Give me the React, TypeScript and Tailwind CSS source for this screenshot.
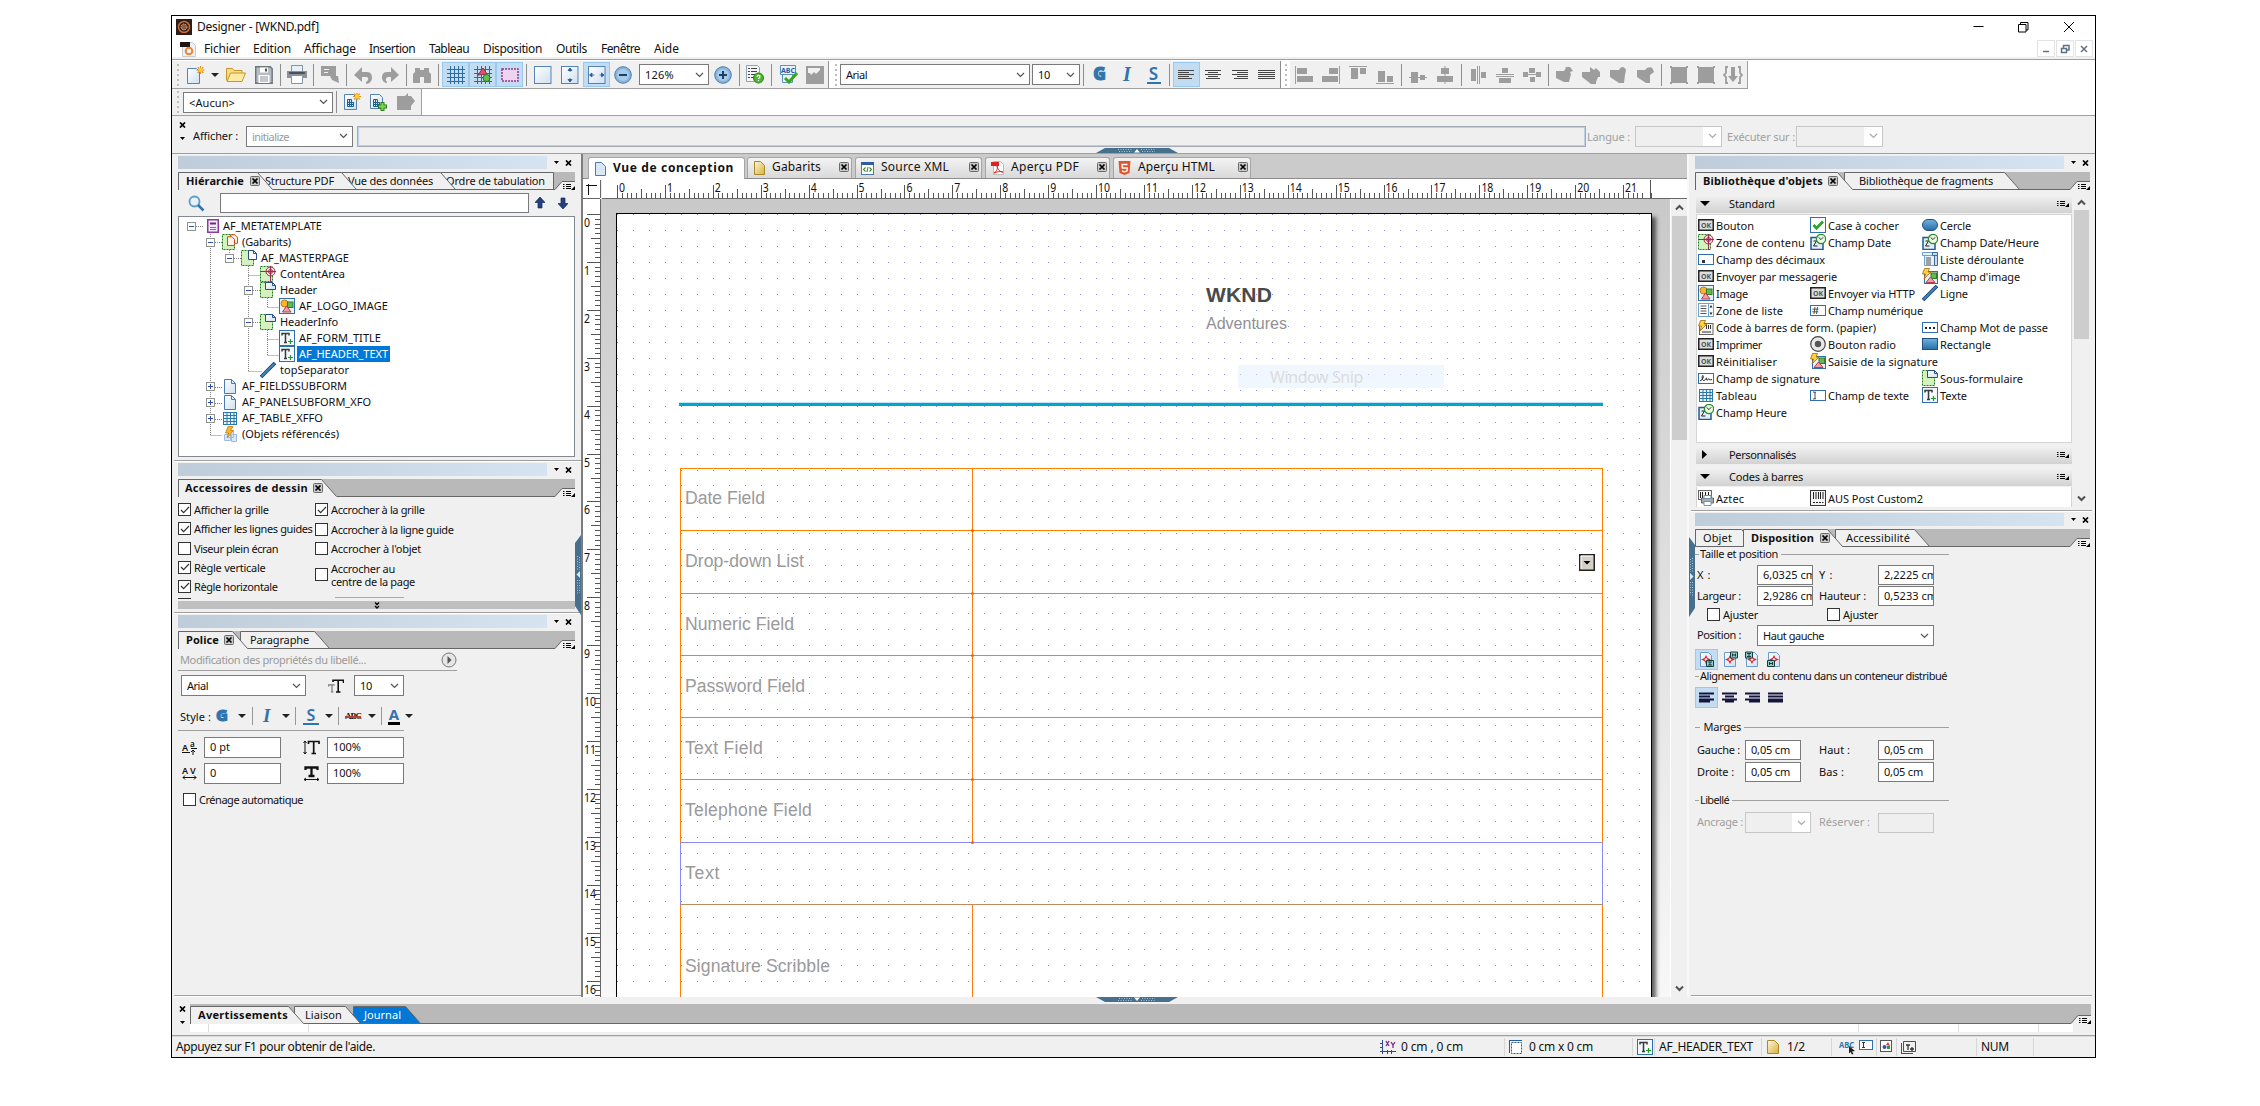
import React, { useLayoutEffect, useRef, useState } from "react";

type Kids = { children?: React.ReactNode };

/* Text set to a fixed run length by adjusting its tracking. */
function T({ w, c = "", children }: { w?: number; c?: string; children: string }) {
  const ref = useRef<HTMLSpanElement>(null);
  const [ls, setLs] = useState(0);
  useLayoutEffect(() => {
    if (w && ref.current) {
      const natural = ref.current.getBoundingClientRect().width;
      setLs((w + 1 - natural) / children.length);
    }
  }, []);
  return (
    <span ref={ref} className={"inline-block w-fit shrink-0 whitespace-pre " + c} style={{ letterSpacing: ls }}>
      {children}
    </span>
  );
}

function Svg({ w = 18, h = 18, vb, c = "", children }: Kids & { w?: number; h?: number; vb?: string; c?: string }) {
  return (
    <svg width={w} height={h} viewBox={vb || `0 0 ${w} ${h}`} className={"block shrink-0 " + c} fill="none">
      {children}
    </svg>
  );
}

const Cell = ({ c = "w-[27px]", on, children }: Kids & { c?: string; on?: boolean }) => (
  <div className={"flex h-[25px] shrink-0 items-center justify-center " + c + (on ? " border border-[#99c9ef] bg-[#c2dcf2]" : "")}>{children}</div>
);
const Sep = ({ c = "w-[6px]" }: { c?: string }) => (
  <div className={"flex h-[22px] shrink-0 justify-center " + c}>
    <div className="h-full w-px bg-[#8e8e8e]" />
  </div>
);
const Grip = ({ c }: { c: string }) => (
  <div className={"flex shrink-0 flex-col items-center gap-[3px] " + c}>
    {[0, 1, 2, 3, 4].map((i) => (
      <div key={i} className="size-[2px] bg-[#bdbdbd]" />
    ))}
  </div>
);
const Chev = ({ c = "#555", k = "" }: { c?: string; k?: string }) => (
  <Svg w={9} h={6} c={k}>
    <path d="M1 1l3.5 3.5L8 1" stroke={c} strokeWidth="1.2" />
  </Svg>
);
const Caret = ({ k = "" }: { k?: string }) => (
  <Svg w={8} h={4} c={k}>
    <path d="M0 0h8L4 4z" fill="#222" />
  </Svg>
);
const Combo = ({ c, t, w, dis }: { c: string; t?: string; w?: number; dis?: boolean }) => (
  <div className={"flex h-[21px] shrink-0 items-center justify-between border pr-[4px] pl-[5px] " + c + (dis ? " border-[#c6c6c6] bg-[linear-gradient(to_left,#fff_18px,#efefef_18px)]" : " border-[#7a7a7a] bg-white")}>
    {t ? <T w={w}>{t}</T> : <span />}
    <Chev c={dis ? "#aaa" : "#555"} />
  </div>
);
const Input = ({ c, t, w, dis }: { c: string; t?: string; w?: number; dis?: boolean }) => (
  <div className={"flex shrink-0 items-center overflow-hidden border px-[5px] " + c + (dis ? " border-[#c6c6c6] bg-[#efefef]" : " border-[#7a7a7a] bg-white")}>{t && <T w={w} c="relative -top-px">{t}</T>}</div>
);
const Check = ({ on, c = "" }: { on?: boolean; c?: string }) => (
  <div className={"flex size-[13px] shrink-0 items-center justify-center border border-[#333] bg-white " + c}>
    {on && (
      <Svg w={10} h={8}>
        <path d="M1 4l2.6 2.7L9 1" stroke="#333" strokeWidth="1.2" />
      </Svg>
    )}
  </div>
);
const XBox = ({ c = "" }: { c?: string }) => (
  <Svg w={10} h={10} c={c}>
    <rect x=".5" y=".5" width="9" height="9" rx="1" fill="#c9c9c9" stroke="#6b6b6b" />
    <path d="M2.5 2.5l5 5m0-5l-5 5" stroke="#000" strokeWidth="1.7" />
  </Svg>
);
const XMark = () => (
  <Svg w={7} h={6}>
    <path d="M1 .5l5 5m0-5l-5 5" stroke="#000" strokeWidth="1.7" />
  </Svg>
);

/* ------------------------------------------------------------------ docks */

const Caption = () => (
  <div className="ml-[4px] flex h-[13px] items-center">
    <div className="h-full w-[369px] bg-linear-to-r from-[#bfccda] to-[#d6e4f2]" />
    <Svg w={5} h={3} c="ml-[7px]">
      <path d="M0 0h5L2.5 3z" fill="#000" />
    </Svg>
    <div className="ml-[6px]">
      <XMark />
    </div>
  </div>
);

const ListGlyph = () => (
  <Svg w={12} h={7}>
    <path d="M0 1.5h1.5M0 3.5h1.5M0 5.5h1.5M3 1.5h5M3 3.5h5M3 5.5h5" stroke="#000" />
    <path d="M12 3v4H8z" fill="#000" />
  </Svg>
);

const Notch = () => (
  <div className="relative h-[18px] w-[20px] shrink-0">
    <Svg w={20} h={18}>
      <path d="M0 17.5L7 9.5H20V18H0z" fill="#f0f0f0" />
      <path d="M0 17.5L7 9.5H20" stroke="#666" />
      <path d="M8 12.5h1.5M8 14.5h1.5M8 16.5h1.5M11 12.500h5M11 14.500h5M11 16.500h5" stroke="#000" />
      <path d="M20 14v4h-4z" fill="#000" />
    </Svg>
  </div>
);

function Tab({ W, c, on, t, w, x, fill = "#f0f0f0", tc = "", flat }: { W: number; c: string; on?: boolean; t: string; w: number; x?: string; fill?: string; tc?: string; flat?: boolean }) {
  const edge = flat ? `M.5 18V.5H${W - 1.5}V17.5` : `M.5 18V.5H${W - 15.5}L${W - 0.5} 17.5`;
  return (
    <div className={"relative flex h-[18px] shrink-0 items-center " + c}>
      <Svg w={W} h={18} c="absolute inset-0">
        <path d={edge + "V18H0z"} fill={fill} />
        <path d={edge} stroke="#666" />
        {!on && <path d={`M0 17.5H${W}`} stroke="#666" />}
      </Svg>
      <T w={w} c={"relative -top-px " + (on ? "font-bold " : "") + tc}>
        {t}
      </T>
      {x && <XBox c={"relative " + x} />}
    </div>
  );
}

const Strip = ({ c = "w-[397px]", children }: Kids & { c?: string }) => (
  <div className={"ml-[4px] flex h-[18px] bg-[#b9b9b9] " + c}>
    {children}
    <div className="flex-1 border-b border-[#666]" />
    <Notch />
  </div>
);

const Rule = () => (
  <div className="h-[2px] shrink-0 border-b border-white bg-[#a0a0a0]" />
);

/* ------------------------------------------------------------------ icons */

const Star = ({ x, y }: { x: number; y: number }) => (
  <g transform={`translate(${x} ${y})`}>
    <path d="M-4 0H4M0-4V4M-2.8-2.8L2.8 2.8M-2.8 2.8L2.8-2.8" stroke="#e08a12" strokeWidth="1.2" />
    <circle r="2.2" fill="#ffc93a" />
  </g>
);
const Grad = () => (
  <defs>
    <linearGradient id="bl" x1="0" y1="0" x2="0" y2="1">
      <stop offset="0" stopColor="#6fb1de" />
      <stop offset="1" stopColor="#2a6ea9" />
    </linearGradient>
    <linearGradient id="pg" x1="0" y1="0" x2="1" y2="1">
      <stop offset="0" stopColor="#fff" />
      <stop offset="1" stopColor="#cfdff0" />
    </linearGradient>
    <linearGradient id="gy" x1="0" y1="0" x2="1" y2="1">
      <stop offset="0" stopColor="#fdf6d8" />
      <stop offset="1" stopColor="#d9b23a" />
    </linearGradient>
  </defs>
);
const GreenSub = () => <rect x=".5" y=".5" width="12" height="15" fill="#d3f2bd" stroke="#1f7a1f" strokeDasharray="2 1" />;

const icons: Record<string, React.ReactNode> = {
  ok: (
    <Svg w={16} h={12}>
      <rect x=".75" y=".75" width="14.5" height="10.5" fill="#ddd" stroke="#222" strokeWidth="1.5" />
      <text x="8" y="8.6" textAnchor="middle" fontSize="7" fontWeight="700" fontFamily="Noto Sans" fill="#555">OK</text>
    </Svg>
  ),
  check: (
    <Svg w={16} h={16}>
      <rect x=".5" y=".5" width="15" height="15" fill="#fff" stroke="#2f6fae" />
      <path d="M3.5 8l3 3.3L13 4.5" stroke="#2ba52b" strokeWidth="2.8" />
    </Svg>
  ),
  circle: (
    <Svg w={16} h={12}>
      <rect x=".5" y=".5" width="15" height="11" rx="5.5" fill="url(#bl)" stroke="#1f4f80" />
    </Svg>
  ),
  content: (
    <Svg w={16} h={16}>
      <GreenSub />
      <circle cx="10.5" cy="5.5" r="4.5" stroke="#9c2c4c" fill="#f6d8de" />
      <circle cx="10.5" cy="5.5" r="2" stroke="#9c2c4c" />
      <path d="M0 5.5h16M10.5 0v16" stroke="#9c2c4c" />
    </Svg>
  ),
  date: (
    <Svg w={16} h={16}>
      <path d="M1 3.5h12v12H1z" fill="#e6eef7" stroke="#1e5a96" strokeWidth="1.5" />
      <path d="M3.5 7h3l-3 5h4" stroke="#222" />
      <circle cx="11" cy="5" r="4.6" fill="#e8fbe0" stroke="#2c8a2c" strokeWidth="1.2" />
      <path d="M8.6 3.4L11 5.6l2.2-2.4" stroke="#333" />
    </Svg>
  ),
  decimal: (
    <Svg w={16} h={11}>
      <rect x=".5" y=".5" width="15" height="10" fill="#fff" stroke="#2f6fae" />
      <path d="M4 6h3v3H4z" fill="#333" />
    </Svg>
  ),
  dropdown: (
    <Svg w={16} h={14}>
      <path d="M.5.5h15v3H.5zM2.5 3.5h10v10h-10z" fill="#e4f0fa" stroke="#6fa3cd" />
      <path d="M4 6h5M4 8h5M4 10h5M4 12h5" stroke="#555" />
      <path d="M10.5.5h5v3h-5zM12.5 3.5h3v10h-3z" fill="#c4dcf0" stroke="#3d6c94" />
    </Svg>
  ),
  imgfield: (
    <Svg w={16} h={16}>
      <rect x="2.5" y="3.5" width="13" height="12" fill="#e6f0fa" stroke="#2f6fae" />
      <rect x="9" y="5" width="5.5" height="5.5" fill="#66b94e" stroke="#2c7d2c" />
      <path d="M8.5 9l4.5 5.5H4z" fill="#f1a0a8" stroke="#b5414d" />
      <path d="M2.5.5h5L6 4h3L2 11l1.5-5H.5z" fill="#ffd23e" stroke="#a06a10" strokeWidth=".8" />
    </Svg>
  ),
  image: (
    <Svg w={16} h={16}>
      <rect x=".5" y=".5" width="15" height="15" fill="#e6f0fa" stroke="#2f6fae" />
      <circle cx="5.5" cy="5.5" r="3.5" fill="#f6b52c" stroke="#c47f10" />
      <rect x="8.5" y="4" width="5.5" height="5.5" fill="#66b94e" stroke="#2c7d2c" />
      <path d="M7.5 8l4.5 6H3.5z" fill="#f1a0a8" stroke="#b5414d" />
    </Svg>
  ),
  line: (
    <Svg w={16} h={16}>
      <path d="M1 15L15 1" stroke="#173f66" strokeWidth="3.6" />
      <path d="M1.5 14.5L14.5 1.5" stroke="#3f86c4" strokeWidth="1.8" />
    </Svg>
  ),
  listbox: (
    <Svg w={16} h={14}>
      <rect x=".5" y=".5" width="15" height="13" fill="#fff" stroke="#6fa3cd" />
      <path d="M2.5 3h6M2.5 5.5h6M2.5 8h6M2.5 10.5h6" stroke="#555" />
      <path d="M10.5.5v13" stroke="#6fa3cd" />
      <path d="M11.5 4.5h3L13 2zM11.5 9.5h3L13 12z" fill="#222" />
    </Svg>
  ),
  num: (
    <Svg w={16} h={11}>
      <rect x=".5" y=".5" width="15" height="10" fill="#fff" stroke="#2f6fae" />
      <path d="M5 2L4 9M7.5 2l-1 7M2.5 4.2h6M2.3 6.8h6" stroke="#444" strokeWidth=".9" />
    </Svg>
  ),
  barform: (
    <Svg w={16} h={15}>
      <rect x="1.5" y="3.5" width="13.5" height="11" fill="#f4f4f4" stroke="#666" />
      <path d="M8.5 5v4M10.5 5v4M12.5 5v4M4 12h9" stroke="#333" />
      <path d="M2.5.5h5L6 4h3L2 11l1.5-5H.5z" fill="#ffd23e" stroke="#a06a10" strokeWidth=".8" />
    </Svg>
  ),
  password: (
    <Svg w={16} h={11}>
      <rect x=".5" y=".5" width="15" height="10" fill="#fff" stroke="#2f6fae" />
      <path d="M3 5h2v2H3zM7 5h2v2H7zM11 5h2v2h-2z" fill="#222" />
    </Svg>
  ),
  radio: (
    <Svg w={16} h={16}>
      <circle cx="8" cy="8" r="7.3" fill="#e9e9e9" stroke="#444" strokeWidth="1.2" />
      <circle cx="8" cy="8" r="3.2" fill="#555" />
    </Svg>
  ),
  rect: (
    <Svg w={16} h={12}>
      <rect x=".5" y=".5" width="15" height="11" fill="url(#bl)" stroke="#1f4f80" />
    </Svg>
  ),
  sig: (
    <Svg w={16} h={11}>
      <rect x=".5" y=".5" width="15" height="10" fill="#fff" stroke="#2f6fae" />
      <path d="M2 8c3-1 4-5 3-5.500S3.500 7 5.500 7.500 8 4.500 8.500 5s-.500 2.500 1 2 1-2 1.500-1 .500 1 3 .500" stroke="#222" />
    </Svg>
  ),
  subform: (
    <Svg w={16} h={16}>
      <GreenSub />
      <path d="M5.5.5h7l3 3v4h-10z" fill="url(#pg)" stroke="#2a4f86" />
      <path d="M12.5.5v3h3" stroke="#2a4f86" />
    </Svg>
  ),
  table: (
    <Svg w={14} h={13}>
      <rect x=".5" y=".5" width="13" height="12" fill="#e9f5fc" stroke="#2b79a8" />
      <path d="M0 3.5h14M0 6.5h14M0 9.5h14M4 0v13M7.5 0v13M11 0v13" stroke="#2b79a8" />
    </Svg>
  ),
  textfield: (
    <Svg w={16} h={11}>
      <rect x=".5" y=".5" width="15" height="10" fill="#fff" stroke="#2f6fae" />
      <path d="M3 2h1l1 .5 1-.5M5 2.5v6M3 9h1l1-.5 1 .5" stroke="#333" strokeWidth=".9" />
    </Svg>
  ),
  text: (
    <Svg w={16} h={16}>
      <rect x=".5" y=".5" width="15" height="15" fill="#f3f8fd" stroke="#2f6fae" />
      <path d="M3 5.5V3.500h7v2M6.500 3.500v9M5 12.500h3" stroke="#3a3a3a" strokeWidth="1.5" />
      <path d="M9 11.500h5M11.500 9v5" stroke="#1f9a1f" strokeWidth="1.2" />
    </Svg>
  ),
  printbar: (
    <Svg w={16} h={16}>
      <rect x=".5" y=".5" width="13" height="9" fill="#f4f4f4" stroke="#666" />
      <path d="M2.500 2v6M4.500 2v6M7.500 2v6M10.500 2v6" stroke="#222" />
      <path d="M3.500 8h12v5h-12z" fill="#aaa" stroke="#666" />
      <path d="M6 5.500h7v3H6zM6 11.500h7v4H6z" fill="#fff" stroke="#6f93b5" />
    </Svg>
  ),
  barcode: (
    <Svg w={16} h={16}>
      <rect x=".5" y=".5" width="15" height="15" fill="#f4f4f4" stroke="#333" />
      <path d="M3.5 2v7M6 2v7M8.5 2v7M10.5 2v7M13 2v7M3 12.5h2M6 12.5h2M9 12.5h2M12 12.5h1.500" stroke="#222" />
    </Svg>
  ),
  root: (
    <Svg w={12} h={14}>
      <rect x=".75" y=".75" width="10.5" height="12.5" fill="#f6ecfa" stroke="#8a3aa8" strokeWidth="1.5" />
      <path d="M3 4.5h6" stroke="#6a2a8a" strokeWidth="2" />
      <path d="M3 8.5h6M3 10.5h6" stroke="#777" />
    </Svg>
  ),
  gabarits: (
    <Svg w={16} h={16}>
      <GreenSub />
      <path d="M8.5.8H13l2.500 2.500v6h-7z" fill="#fff2e6" stroke="#c8501a" />
      <path d="M5.5 2.800H10l2.500 2.500v6.200h-7z" fill="#fff2e6" stroke="#c8501a" />
    </Svg>
  ),
  master: (
    <Svg w={16} h={16}>
      <GreenSub />
      <path d="M7.5.5h5l3 3v6h-8z" fill="#fff" stroke="#2a4f86" />
      <path d="M12.5.5v3h3" stroke="#2a4f86" />
    </Svg>
  ),
  page: (
    <Svg w={12} h={15}>
      <path d="M.5.5h7l4 4v10h-11z" fill="url(#pg)" stroke="#4a7ab5" />
      <path d="M7.5.5v4h4" stroke="#4a7ab5" />
    </Svg>
  ),
  refs: (
    <Svg w={14} h={16}>
      <path d="M5.5 4.5h5v7h-5zM8.5 8.5h5v7h-5zM1.5 8.5h6v6h-6z" fill="#dce8f6" stroke="#9fbbe0" />
      <path d="M5 .5h5L7.5 4.5h3L4 12l1.500-5h-3z" fill="#f9b52c" stroke="#c47f10" strokeWidth=".8" />
    </Svg>
  ),
};

const Letter = ({ t, c }: { t: string; c: string }) => <span className={"shrink-0 leading-none text-[#2f74ad] " + c}>{t}</span>;

const AlignIco = ({ k, s = "#444" }: { k: string; s?: string }) => {
  const d: Record<string, string> = {
    l: "M0 .5h16M0 2.5h11M0 4.5h16M0 6.5h11M0 8.5h14",
    c: "M0 .5h16M3 2.5h10M0 4.5h16M3 6.5h10M1 8.5h14",
    r: "M0 .5h16M5 2.5h11M0 4.5h16M5 6.5h11M2 8.5h14",
    j: "M0 .5h17M0 2.5h17M0 4.5h17M0 6.5h17M0 8.5h17",
  };
  return (
    <Svg w={17} h={9}>
      <path d={d[k]} stroke={s} />
    </Svg>
  );
};

const G = ({ d, s }: { d: string; s?: string }) => (
  <Svg>
    <path d={d} fill="#9d9d9d" fillRule="evenodd" />
    {s && <path d={s} stroke="#9d9d9d" />}
  </Svg>
);

const ZoomDot = ({ plus }: { plus?: boolean }) => (
  <Svg>
    <circle cx="9" cy="9" r="8.3" fill="#86b4dc" stroke="#4f7faa" />
    <circle cx="9" cy="9" r="6" fill="#a9cbe8" />
    <path d={plus ? "M5 9h8M9 5v8" : "M5 9h8"} stroke="#17426e" strokeWidth="2" />
  </Svg>
);

const PageBtn = ({ d }: { d?: string }) => (
  <Svg>
    <rect x=".5" y=".5" width="16.5" height="17" fill="url(#pg)" stroke="#5583b3" />
    {d && <path d={d} fill="#1f5d97" stroke="#1f5d97" strokeWidth=".8" />}
  </Svg>
);

function Toolbar1() {
  const grid = "M3.5 0v18M7.5 0v18M11.5 0v18M15.5 0v18M0 3.5h18M0 7.5h18M0 11.5h18M0 15.5h18";
  return (
    <div className="flex h-[28px] w-[1576px] items-center border-b border-[#a0a0a0] bg-[#f0f0f0]">
      <Grip c="w-[11px]" />
      <Cell c="w-[25px]">
        <Svg w={20} h={20}>
          <path d="M1.5 3.5h9l3 3v12h-12z" fill="url(#pg)" stroke="#5583b3" />
          <Star x={14.5} y={5} />
        </Svg>
      </Cell>
      <Cell c="w-[14px]"><Caret /></Cell>
      <Cell c="w-[28px]">
        <Svg w={20} h={15}>
          <path d="M.5 13.5v-12h6l1.500 2h8v3" fill="#f8dd85" stroke="#c7962a" />
          <path d="M1 14.5L4.500 6h15L16 14.500z" fill="#ffe9a3" stroke="#c7962a" />
        </Svg>
      </Cell>
      <Cell>
        <Svg>
          <path d="M.7.7h14.500l2 2v14.500H.7z" fill="#b5bcc3" stroke="#6d757d" strokeWidth="1.4" />
          <path d="M5 1.5h8v5H5zM3.5 9h11v8h-11z" fill="#fff" />
          <path d="M10 2.500h2v3h-2z" fill="#555" />
          <path d="M5 11h8M5 13h8M5 15h8" stroke="#8a929a" />
        </Svg>
      </Cell>
      <Sep />
      <Cell>
        <Svg w={20} h={19}>
          <path d="M4.5.5h11v6h-11z" fill="#e4f0fa" stroke="#7f95a8" />
          <path d="M0 6h20v7H0z" fill="#8b9299" />
          <path d="M4.5 10.5h11v8h-11z" fill="#fff" stroke="#7f95a8" />
          <path d="M2 8h16" stroke="#4a5157" strokeWidth="2" />
        </Svg>
      </Cell>
      <Sep />
      <Cell><G d="M0 0h15v10h2l1 7-7-3-2-4H0zM3 3v1h5V3zM3 6v1h4V6z" /></Cell>
      <Sep />
      <Cell><G d="M0 9l8-8v5h5c4 0 5 3 5 6s-3 6-6 6v-2c3-2 3-5 0-5H8v5z" /></Cell>
      <Cell><G d="M18 9l-8-8v5H6c-4 0-5 3-5 6s3 5 5 5v-1c-2-2-1-5 1-5h3v5z" /></Cell>
      <Sep />
      <Cell c="w-[26px]"><G d="M2 2h5v2h4V2h5v4l2 2v9h-7v-6H7v6H0V8l2-2z" /></Cell>
      <Sep />
      <div className="w-px" />
      <Cell on><Svg><path d={grid} stroke="#2b6b9f" /></Svg></Cell>
      <Cell on>
        <Svg>
          <path d={grid} stroke="#2b6b9f" />
          <path d="M4 9l5-7 4 6z" fill="#d9566c" stroke="#9c2c4c" />
          <circle cx="12.5" cy="12" r="3.5" fill="#62c04a" stroke="#237a23" />
        </Svg>
      </Cell>
      <Cell on>
        <Svg w={18} h={14}>
          <rect x="1" y="1" width="16" height="12" fill="#f0d3ec" stroke="#8d3a92" strokeWidth="1.5" strokeDasharray="2 1" />
        </Svg>
      </Cell>
      <Sep />
      <Cell><PageBtn /></Cell>
      <Cell><PageBtn d="M9 2L11 4.500H7zM9 4v2M9 16L7 13.500h4zM9 12v2" /></Cell>
      <Cell on><PageBtn d="M1.500 9L4 7v4zM4 9h2.500M16 9l-2.500-2v4zM11.500 9h2.500" /></Cell>
      <Cell c="w-[26px]"><ZoomDot /></Cell>
      <Combo c="ml-[3px] w-[70px]" t="126%" w={28} />
      <Cell><ZoomDot plus /></Cell>
      <Sep />
      <Cell c="w-[26px]">
        <Svg w={18} h={19}>
          <path d="M.5.5h11l2 2v14H.5z" fill="#f5f5f5" stroke="#8fa3b8" />
          <path d="M2 3.5h2M2 6.5h2M2 9.5h2M2 12.5h2M5 3.5h6M5 6.5h6M5 9.5h4M5 12.5h4" stroke="#444" />
          <circle cx="12.5" cy="13" r="5" fill="#4db82f" stroke="#2b7d17" />
          <path d="M11 11.800c.3-2 3-1.600 3 0 0 1.200-1.500 1-1.500 2.200M12.500 15v1.200" stroke="#fff" strokeWidth="1.2" />
        </Svg>
      </Cell>
      <Sep c="w-[7px]" />
      <Cell>
        <Svg w={19} h={19}>
          <path d="M1.5.5h15v9h-15zM3.5 9.5h10v8h-10z" fill="#eaf3fb" stroke="#5c8fc0" />
          <text x="9" y="8" textAnchor="middle" fontSize="7" fontWeight="700" fontFamily="Noto Sans" fill="#1d5f9c">ABC</text>
          <path d="M6 13l4 4 8-9" stroke="#39a81d" strokeWidth="3" />
        </Svg>
      </Cell>
      <Cell c="w-[26px]"><G d="M0 0h18v18H0zM2 2v5h2l1 2 3-3 2 2 4-4V2z" /></Cell>
      <div className="h-full w-[3px] border-l border-[#8e8e8e] bg-white" />
      <Grip c="h-full w-[9px] bg-white pt-[3px]" />
      <Combo c="w-[190px]" t="Arial" w={20} />
      <Combo c="ml-[2px] w-[48px]" t="10" w={11} />
      <Sep />
      <Cell><Letter t="G" c="relative -top-px text-[17px] font-black [-webkit-text-stroke:1px_#2f74ad]" /></Cell>
      <Cell c="w-[28px]"><Letter t="I" c="relative -top-px font-['Liberation_Serif'] text-[20px] font-bold italic" /></Cell>
      <Cell c="w-[25px]"><Letter t="S" c="w-[14px] border-b-2 border-[#2f74ad] text-center text-[17px] font-semibold" /></Cell>
      <Sep c="w-[7px]" />
      <Cell on><AlignIco k="l" /></Cell>
      <Cell><AlignIco k="c" /></Cell>
      <Cell c="w-[26px]"><AlignIco k="r" /></Cell>
      <Cell><AlignIco k="j" /></Cell>
      <div className="h-full w-[2px] border-l border-[#8e8e8e] bg-white" />
      <Grip c="h-full w-[8px] bg-white pt-[3px]" />
      <Cell><G d="M2 2h10v6H2zM2 10h16v6H2z" s="M.5 0v18" /></Cell>
      <Cell><G d="M7 2h9v6H7zM0 10h16v6H0z" s="M17.5 0v18" /></Cell>
      <Cell><G d="M2 2h7v11H2zM11 2h6v6h-6z" s="M0 .5h18" /></Cell>
      <Cell><G d="M2 5h7v11H2zM11 10h6v6h-6z" s="M0 17.5h18" /></Cell>
      <Sep />
      <Cell><G d="M2 6h7v11H2zM11 9h5v5h-5z" s="M0 11.5h18" /></Cell>
      <Cell><G d="M5 2h8v6H5zM1 10h16v6H1z" s="M9 0v18" /></Cell>
      <Sep />
      <Cell><G d="M2 3h5v12H2zM12 6h5v6h-5z" s="M8.5 0v18M10.5 0v18" /></Cell>
      <Cell><G d="M6 2h6v5H6zM3 12h12v5H3z" s="M0 8.5h18M0 10.5h18" /></Cell>
      <Cell><G d="M6 2h6v5H6zM0 6h5v5H0zM13 6h5v5h-5zM7 11h5v5H7z" s="M5 8.5h8" /></Cell>
      <Sep />
      <Cell c="w-[26px]"><G d="M1 5h8l2-3-1-1h5l3 4-3 1 1 2-2 8h-5L1 12z" /></Cell>
      <Cell><G d="M0 6h8V1l4 3 2-2 4 4v5h-2l-2 5v2H9L0 11z" /></Cell>
      <Cell><G d="M1 4h9c2-5 6-3 7 0l-1 5-1 8h-5L1 11z" /></Cell>
      <Cell><G d="M1 4h8l2-2c5-2 6 1 7 4l-4 3v8h-4L1 11z" /></Cell>
      <Sep c="w-[7px]" />
      <Cell><G d="M0 0h2v1h14V0h2v2h-1v14h1v2h-2v-1H2v1H0v-2h1V2H0z" /></Cell>
      <Cell><G d="M0 0h2v1h14V0h2v2h-1v14h1v2h-2v-1H2v1H0v-2h1V2H0z" /></Cell>
      <Cell>
        <Svg w={20}>
          <path d="M5 1H3v6L1 9l2 2v6h2M15 1h2v6l2 2-2 2v6h-2" stroke="#9d9d9d" strokeWidth="1.8" />
          <path d="M8 1h4v9h3l-5 6-5-6h3z" fill="#9d9d9d" />
        </Svg>
      </Cell>
      <div className="h-full w-[2px] border-r border-[#a0a0a0]" />
    </div>
  );
}

const Bars = () => <path d="M4.500 6.500v7h6v-4h-2v-3zM4.500 9.500h6M4.500 11.500h6M6.500 7v6M8.500 7v6" fill="#cfe3f5" stroke="#1d5f9c" />;

function Toolbar2() {
  return (
    <div className="flex h-[26px] w-[250px] items-center border-r border-[#a0a0a0] bg-[#f0f0f0]">
      <Grip c="w-[11px]" />
      <Combo c="w-[150px]" t="<Aucun>" w={45} />
      <Sep c="w-[6px]" />
      <Cell c="w-[25px]">
        <Svg w={18} h={18}>
          <path d="M1.5 1.5h9l3 3v12h-12z" fill="url(#pg)" stroke="#5583b3" />
          <Bars />
          <Star x={14} y={3.5} />
        </Svg>
      </Cell>
      <Cell c="w-[29px]">
        <Svg w={19} h={19}>
          <path d="M1.5 1.5h9l3 3v11h-12z" fill="url(#pg)" stroke="#5583b3" />
          <Bars />
          <path d="M13.5 9v9M9 13.5h9" stroke="#2c7d17" strokeWidth="4" />
          <path d="M13.5 10v7M10 13.5h7" stroke="#7ed957" strokeWidth="2" />
        </Svg>
      </Cell>
      <Cell c="w-[26px]"><G d="M0 3h8l3-3v3h3l4 5-4 5v4H0zM2 0" /></Cell>
    </div>
  );
}

const Handle = () => (
  <Svg w={82} h={5}>
    <path d="M0 5L9 0h64l9 5z" fill="#47708f" />
    <path d="M22 1.5h15M45 1.5h15M23 3.5h13M46 3.5h13" stroke="#a9c3d8" strokeDasharray="1 1.5" />
    <path d="M38 4.5L41 1l3 3.500z" fill="#fff" />
  </Svg>
);
const VHandle = ({ flip }: { flip?: boolean }) => (
  <Svg w={6} h={80} c={flip ? "scale-x-[-1]" : ""}>
    <path d="M6 0L0 8v63l6 9z" fill="#47708f" />
    <path d="M2.5 21v14M2.5 45v14M4.5 22v13M4.5 45v13" stroke="#a9c3d8" strokeDasharray="1 1.5" />
    <path d="M5 36v7l-3.500-3.500z" fill="#dfe9f2" />
  </Svg>
);

/* ------------------------------------------------------------------ tree */

type Node = { pad: string; box?: "-" | "+"; icon: string; t: string; w: number; sel?: boolean };
const nodes: Node[] = [
  { pad: "pl-[8px]", box: "-", icon: "root", t: "AF_METATEMPLATE", w: 98 },
  { pad: "pl-[27px]", box: "-", icon: "gabarits", t: "(Gabarits)", w: 48 },
  { pad: "pl-[46px]", box: "-", icon: "master", t: "AF_MASTERPAGE", w: 87 },
  { pad: "pl-[65px]", icon: "content", t: "ContentArea", w: 64 },
  { pad: "pl-[65px]", box: "-", icon: "subform", t: "Header", w: 36 },
  { pad: "pl-[84px]", icon: "image", t: "AF_LOGO_IMAGE", w: 88 },
  { pad: "pl-[65px]", box: "-", icon: "subform", t: "HeaderInfo", w: 57 },
  { pad: "pl-[84px]", icon: "text", t: "AF_FORM_TITLE", w: 81 },
  { pad: "pl-[84px]", icon: "text", t: "AF_HEADER_TEXT", w: 88, sel: true },
  { pad: "pl-[65px]", icon: "line", t: "topSeparator", w: 68 },
  { pad: "pl-[27px]", box: "+", icon: "page", t: "AF_FIELDSSUBFORM", w: 104 },
  { pad: "pl-[27px]", box: "+", icon: "page", t: "AF_PANELSUBFORM_XFO", w: 128 },
  { pad: "pl-[27px]", box: "+", icon: "table", t: "AF_TABLE_XFFO", w: 80 },
  { pad: "pl-[27px]", icon: "refs", t: "(Objets référencés)", w: 96 },
];

function Tree() {
  return (
    <div className="relative mt-[3px] ml-[4px] h-[241px] w-[397px] border border-[#828790] bg-white pt-px">
      <Svg w={130} h={239} c="absolute top-0 left-0">
        <path
          d="M31.500 17v202M31.500 218.500h12M50.500 33v4M69.500 49v105M69.500 58.500h14M69.500 154.500h14M88.500 81v9M88.500 90.500h14M88.500 113v25M88.500 122.500h14M88.500 138.500h14M17 9.500h8M36 25.500h8M55 41.500h8M74 73.500h8M74 105.500h8M36 170.500h8M36 186.500h8M36 202.500h8"
          stroke="#808080"
          strokeDasharray="1 1"
        />
      </Svg>
      {nodes.map((n) => (
        <div key={n.t} className={"relative flex h-[16px] items-center " + n.pad}>
          <div className="w-[9px]">
            {n.box && (
              <Svg w={9} h={9}>
                <rect x=".5" y=".5" width="8" height="8" fill="#fff" stroke="#919191" />
                <path d={n.box === "+" ? "M2 4.500h5M4.500 2v5" : "M2 4.500h5"} stroke="#2b4fa8" />
              </Svg>
            )}
          </div>
          <div className={"flex w-[17px] justify-center " + (n.icon === "root" ? "ml-[8px]" : "ml-[6px]")}>{icons[n.icon]}</div>
          {n.sel ? (
            <div className="ml-[2px] flex h-[16px] items-center bg-[#0078d7] px-[2px] text-white"><T w={n.w} c="relative -top-px">{n.t}</T></div>
          ) : (
            <T w={n.w} c={"relative -top-px " + (n.icon === "root" ? "ml-[2px]" : "ml-[4px]")}>{n.t}</T>
          )}
        </div>
      ))}
    </div>
  );
}

const leftChecks: [string, number, boolean][] = [
  ["Afficher la grille", 73.5, true],
  ["Afficher les lignes guides", 117.5, true],
  ["Viseur plein écran", 83, false],
  ["Règle verticale", 70.5, true],
  ["Règle horizontale", 82.5, true],
];

const StyleSep = ({ c }: { c: string }) => <div className={"h-[18px] w-px shrink-0 bg-[#999] " + c} />;

function LeftDock() {
  return (
    <div className="relative flex w-[409px] shrink-0 flex-col bg-[#f0f0f0] pt-[2px] pl-[2px]">
      <Caption />
      <div className="mt-[3px]">
        <Strip>
          <Tab W={95} c="z-40 w-[95px] pl-[8px]" on t="Hiérarchie" w={57} x="ml-[6px]" />
          <Tab W={100} c="z-30 -ml-[16px] w-[100px] pl-[8px]" t="Structure PDF" w={68} />
          <Tab W={115} c="z-20 -ml-[16px] w-[115px] pl-[7px]" t="Vue des données" w={84} />
          <Tab W={115} c="z-10 -ml-[16px] w-[115px] pl-[6px]" t="Ordre de tabulation" w={98} flat />
        </Strip>
      </div>
      <div className="mt-[3px] flex h-[20px] items-center">
        <Svg w={17} h={17} c="ml-[14px]">
          <circle cx="6.5" cy="6.5" r="5" fill="#e3f2fc" stroke="#5c9cc8" strokeWidth="1.8" />
          <path d="M10 10l5.500 5.500" stroke="#2f74ad" strokeWidth="2.5" />
        </Svg>
        <div className="ml-[15px] h-[20px] w-[309px] border border-[#7a7a7a] bg-white" />
        <Svg w={10} h={12} c="ml-[6px]"><path d="M5 0l5 5.500H7V11H3V5.500H0z" fill="#24417f" stroke="#14285a" strokeWidth=".7" /></Svg>
        <Svg w={10} h={12} c="ml-[13px]"><path d="M5 12l5-5.500H7V1H3v5.500H0z" fill="#24417f" stroke="#14285a" strokeWidth=".7" /></Svg>
      </div>
      <Tree />
      <div className="mt-[3px]"><Rule /></div>
      <div className="mt-px"><Caption /></div>
      <div className="mt-[3px]">
        <Strip>
          <Tab W={159} c="w-[159px] pl-[7px]" on t="Accessoires de dessin" w={122} x="ml-[5px]" />
        </Strip>
      </div>
      <div className="ml-[4px] flex h-[102px] overflow-hidden pt-[3px]">
        <div className="flex w-[137px] flex-col">
          {leftChecks.map(([t, w, on]) => (
            <div key={t} className="flex h-[19.5px] items-center gap-[3px]"><Check on={on} /><T w={w}>{t}</T></div>
          ))}
          <div className="mt-[2px] h-px w-[13px] bg-[#333]" />
        </div>
        <div className="flex flex-col">
          <div className="flex h-[19.5px] items-center gap-[3px]"><Check on /><T w={92.5}>Accrocher à la grille</T></div>
          <div className="flex h-[19.5px] items-center gap-[3px]"><Check /><T w={121.5}>Accrocher à la ligne guide</T></div>
          <div className="flex h-[19.5px] items-center gap-[3px]"><Check /><T w={89}>{"Accrocher à l'objet"}</T></div>
          <div className="flex h-[32px] items-center gap-[3px]">
            <Check />
            <div className="flex flex-col items-start leading-[13px]"><T w={63}>Accrocher au</T><T w={83}>centre de la page</T></div>
          </div>
          <div className="mt-[6px] ml-[20px] h-px w-[69px] bg-[#aaa]" />
        </div>
      </div>
      <div className="mt-[2px] ml-[4px] flex h-[8px] w-[397px] items-center justify-center bg-[#bfbfbf]">
        <Svg w={6} h={7}><path d="M1 .5l2 2 2-2M1 4l2 2 2-2" stroke="#000" strokeWidth="1.3" /></Svg>
      </div>
      <div className="mt-[3px]"><Rule /></div>
      <div className="mt-px"><Caption /></div>
      <div className="mt-[3px]">
        <Strip>
          <Tab W={70} c="z-20 w-[70px] pl-[8px]" on t="Police" w={32} x="ml-[5px]" />
          <Tab W={90} c="z-10 -ml-[8px] w-[90px] pl-[10px]" t="Paragraphe" w={58} />
        </Strip>
      </div>
      <div className="ml-[4px] flex h-[22px] w-[279px] items-center justify-between border-b border-[#a0a0a0] pl-[2px] text-[#9a9a9a]">
        <T w={185}>Modification des propriétés du libellé...</T>
        <Svg w={16} h={16}>
          <circle cx="8" cy="8" r="7" fill="#e6e6e6" stroke="#777" />
          <path d="M6.5 4l4 4-4 4z" fill="#555" />
        </Svg>
      </div>
      <div className="mt-[4px] flex h-[21px] items-center pl-[7px]">
        <Combo c="w-[125px]" t="Arial" w={20} />
        <Svg w={16} h={14} c="ml-[22px]">
          <path d="M5 3V1.200h10.500V4M10.200 1.500V13M8 13h4.500" stroke="#111" strokeWidth="1.6" />
          <path d="M.7 7.500V5.800h6M4 6v7M2.800 13h2.600" stroke="#777" strokeWidth="1.2" />
        </Svg>
        <Combo c="ml-[10px] w-[50px]" t="10" w={11} />
      </div>
      <div className="mt-[4px] ml-[4px] h-[31px] w-[226px] border-b border-[#a0a0a0]">
        <div className="flex h-[32px] w-[240px] items-center pl-[2px]">
          <div className="w-[36px] shrink-0"><T w={30}>Style :</T></div>
          <Letter t="G" c="relative -top-px w-[14px] text-[16px] font-black [-webkit-text-stroke:1px_#2f74ad]" />
          <Caret k="ml-[8px]" />
          <StyleSep c="ml-[6px]" />
          <Letter t="I" c="relative -top-px ml-[10px] w-[12px] font-['Liberation_Serif'] text-[19px] font-bold italic" />
          <Caret k="ml-[7px]" />
          <StyleSep c="ml-[5px]" />
          <Letter t="S" c="ml-[7px] w-[16px] border-b-2 border-[#2f74ad] text-center text-[16px] font-semibold" />
          <Caret k="ml-[6px]" />
          <StyleSep c="ml-[5px]" />
          <span className="relative ml-[6px] w-[16px] shrink-0 font-['Liberation_Serif'] text-[9px] leading-none font-bold tracking-[-1px] after:absolute after:inset-x-0 after:top-[4px] after:h-[2px] after:bg-[#b8433c] after:content-['']">ABC</span>
          <Caret k="ml-[7px]" />
          <StyleSep c="ml-[5px]" />
          <Letter t="A" c="ml-[6px] w-[12px] border-b-[3px] border-black text-center text-[15px] font-bold" />
          <Caret k="ml-[5px]" />
        </div>
      </div>
      <div className="mt-[6px] flex h-[21px] items-center pl-[8px]">
        <Svg w={15} h={14} c="overflow-visible">
          <text x="0" y="10" fontSize="9" fontFamily="Noto Sans" fontWeight="600" fill="#111">A</text>
          <text x="8" y="6" fontSize="8" fontFamily="Noto Sans" fontWeight="600" fill="#111">a</text>
          <path d="M0 11.5h8M9 7.5h6M11 14V9M9 11l2-2 2 2" stroke="#111" />
        </Svg>
        <Input c="ml-[7px] h-[21px] w-[77px]" t="0 pt" w={19} />
        <Svg w={17} h={15} c="ml-[22px]">
          <path d="M5.500 4V1.500H16V4M10.700 2v11.500M8.500 13.500H13" stroke="#111" strokeWidth="1.7" />
          <path d="M2 1v13M.5 3L2 1l1.500 2M.5 12L2 14l1.500-2" stroke="#111" />
        </Svg>
        <Input c="ml-[7px] h-[21px] w-[77px]" t="100%" w={27} />
      </div>
      <div className="mt-[5px] flex h-[21px] items-center pl-[8px]">
        <Svg w={15} h={13} c="overflow-visible">
          <text x="0" y="7" fontSize="9" fontFamily="Noto Sans" fontWeight="600" fill="#111">A</text>
          <text x="8" y="7" fontSize="9" fontFamily="Noto Sans" fontWeight="600" fill="#111">V</text>
          <path d="M1 10.5h13M3 8.5l-2 2 2 2M12 8.5l2 2-2 2" stroke="#111" />
        </Svg>
        <Input c="ml-[7px] h-[21px] w-[77px]" t="0" />
        <Svg w={17} h={15} c="ml-[22px]">
          <path d="M2.500 4V1.500h12V4M8.500 2v8.500M5.500 10h6" stroke="#111" strokeWidth="2.3" />
          <path d="M1 13.500h15M3 12l-2 1.500L3 15M14 12l2 1.500-2 1.500" stroke="#111" />
        </Svg>
        <Input c="ml-[7px] h-[21px] w-[77px]" t="100%" w={27} />
      </div>
      <div className="mt-[9px] flex h-[13px] items-center gap-[3px] pl-[9px]"><Check /><T w={103}>Crénage automatique</T></div>
      <div className="absolute top-[381px] right-0"><VHandle /></div>
      <div className="mt-auto"><Rule /></div>
    </div>
  );
}

/* ------------------------------------------------------------------ centre */

function DocTab({ c, icon, t, w, on, x }: { c: string; icon: React.ReactNode; t: string; w: number; on?: boolean; x?: boolean }) {
  return (
    <div className={"relative flex h-[21px] shrink-0 items-center rounded-t-[3px] border border-b-0 border-[#a5a5a5] text-[12px] " + c + (on ? " z-10 -mb-px h-[22px] bg-white font-bold" : " bg-linear-to-b from-[#f4f4f4] to-[#d9d9d9]")}>
      {icon}
      <T w={w} c="relative -top-px ml-[7px]">{t}</T>
      {x && <XBox c="relative -top-px mr-[2px] ml-auto" />}
    </div>
  );
}

const U = 47.91;

function Rulers({ vertical }: { vertical?: boolean }) {
  const n = vertical ? 164 : 215;
  const o = 15;
  const ticks = Array.from({ length: n }, (_, i) => {
    const p = Math.round(o + (i * U) / 10) + 0.5;
    const len = i % 10 === 0 ? 13 : i % 5 === 0 ? 9 : 5;
    return vertical ? `M${17 - len} ${p}h${len}` : `M${p} ${19 - len}v${len}`;
  }).join("");
  const nums = Array.from({ length: vertical ? 17 : 22 }, (_, i) => i);
  const label = "Noto Sans";
  return vertical ? (
    <Svg w={18} h={798}>
      <path d={ticks} stroke="#555" />
      <path d="M17.5 0v798" stroke="#666" />
      {nums.map((i) => (
        <text key={i} x="1" y={o + i * U + 13} fontSize="12" fontFamily={label} fill="#111" textLength={i > 9 ? 12 : 6} lengthAdjust="spacingAndGlyphs">{i}</text>
      ))}
    </Svg>
  ) : (
    <Svg w={1085} h={20}>
      <path d={ticks} stroke="#555" />
      <path d="M1048.5 1v18M1049.5 14v5" stroke="#555" />
      <path d="M0 19.5h1085" stroke="#666" />
      {nums.map((i) => (
        <text key={i} x={o + i * U + 2} y={12.5} fontSize="12" fontFamily={label} fill="#111" textLength={i > 9 ? 12 : 6} lengthAdjust="spacingAndGlyphs">{i}</text>
      ))}
    </Svg>
  );
}

function Dots() {
  const d: string[] = [];
  for (let j = 0; j < 49; j++) for (let i = 0; i < 65; i++) d.push(`M${Math.round(i * 15.97)} ${Math.round(j * 15.97)}h1v1h-1z`);
  return <Svg w={1034} h={783} c="absolute inset-0"><path d={d.join("")} fill="#8484f2" /></Svg>;
}

const fields: [string, number, string][] = [
  ["Date Field", 79, "h-[62px]"],
  ["Drop-down List", 118, "h-[63px]"],
  ["Numeric Field", 108, "h-[62px]"],
  ["Password Field", 119, "h-[62px]"],
  ["Text Field", 77, "h-[62px]"],
  ["Telephone Field", 126, "h-[63px]"],
  ["Text", 34, "h-[62px]"],
  ["Signature Scribble", 144, "h-[125px]"],
];

function FormPage() {
  return (
    <div className="relative ml-[15px] w-[1036px] shrink-0 border border-b-0 border-black bg-white shadow-[4px_4px_4px_rgba(0,0,0,0.6)]">
      <Dots />
      <div className="relative flex h-[254px] flex-col items-start overflow-hidden font-['Liberation_Sans']">
        <div className="ml-[589px] flex flex-col items-start">
          <T w={65} c="mt-[68px] text-[21px] leading-[26px] font-bold text-[#4a4a4a]">WKND</T>
          <T w={80} c="mt-[6px] text-[16px] leading-[20px] text-[#919191]">Adventures</T>
        </div>
        <div className="mt-[31px] ml-[621px] h-[23px] w-[206px] bg-[#e2f0fd]/50 pl-[32px] font-['Noto_Sans'] text-[16px] leading-[25px] text-[#dcdcdc]"><T w={92}>Window Snip</T></div>
        <div className="mt-[14px] ml-[62px] h-[4px] w-[924px] border-t border-[#bfe6f2] bg-[#00a6cf]" />
      </div>
      <div className="relative ml-[63px] w-[923px] border-t border-[#ff8000]">
        {fields.map(([t, w, h], i) => (
          <div key={t} className={"relative flex items-center border-x border-b font-['Liberation_Sans'] text-[17.600px] text-[#9a9a9a] " + h + (i === 6 ? " border-x-[#8a8af4] border-b-[#c08a5a]" : i === 5 ? " border-x-[#ff8000] border-b-[#8a8af4]" : " border-[#ff8000]")}>
            <div className="flex h-full w-[290px] items-center pl-[4px]"><T w={w} c={i > 0 ? "" : "-mt-[2px]"}>{t}</T></div>
            {i !== 6 && (
              <div className="flex h-full w-[3px] flex-col items-center justify-between">
                <div className="h-full w-px bg-[#ff7a10]" />
                <div className="-mb-[2px] size-[3px] shrink-0 rounded-full bg-[#ff5a00]" />
              </div>
            )}
            {i === 1 && (
              <Svg w={16} h={17} c="mr-[7px] ml-auto">
                <rect x=".75" y=".75" width="14.5" height="15.5" fill="#d5d1c9" stroke="#222" strokeWidth="1.5" />
                <path d="M2 15V2h12" stroke="#fff" />
                <path d="M4.500 7h7L8 10.500z" fill="#000" />
              </Svg>
            )}
          </div>
        ))}
      </div>
    </div>
  );
}

const Arrow = ({ up }: { up?: boolean }) => (
  <Svg w={9} h={7}><path d={up ? "M1 5.500L4.500 2 8 5.500" : "M1 1.500L4.500 5 8 1.500"} stroke="#505050" strokeWidth="2" /></Svg>
);

function Centre() {
  return (
    <div className="flex w-[1106px] shrink-0 flex-col border-l-2 border-[#7d7d7d] bg-[#cbcbcb]">
      <div className="flex h-[25px] shrink-0 items-end border-b border-[#8c8c8c]">
        <DocTab c="ml-[5px] w-[157px] pl-[6px]" on icon={<Svg w={11} h={14}><path d="M.5.5h6l4 4v9H.5z" fill="#d9e8f8" stroke="#4a7ab5" /></Svg>} t="Vue de conception" w={120} />
        <DocTab c="ml-[2px] w-[105px] pl-[6px]" x icon={<Svg w={11} h={14}><path d="M.5.5h6l4 4v9H.5z" fill="url(#gy)" stroke="#a8892b" /></Svg>} t="Gabarits" w={48} />
        <DocTab c="ml-[3px] w-[127px] pl-[5px]" x icon={<Svg w={13} h={13}><rect x=".5" y=".5" width="12" height="12" fill="#fff" stroke="#4a7ab5" /><path d="M0 1.5h13" stroke="#2f5fa0" strokeWidth="3" /><path d="M4.500 5.500l-2 2 2 2M8.500 5.500l2 2-2 2M7 5l-1 5" stroke="#3f8a2f" strokeWidth="1.1" /></Svg>} t="Source XML" w={67} />
        <DocTab c="ml-[3px] w-[125px] pl-[5px]" x icon={<Svg w={13} h={14}><path d="M2.5.5h7l3 3v10h-10z" fill="#fff" stroke="#bbb" /><path d="M0 1h8v4H0z" fill="#d9231c" /><path d="M3 12c3-2 4-5 3-7 1 4 3 6 6 6-4-1-6 0-9 1z" stroke="#d9231c" /></Svg>} t="Aperçu PDF" w={67} />
        <DocTab c="ml-[3px] w-[138px] pl-[4px]" x icon={<Svg w={13} h={14}><path d="M.5 0h12l-1 12-5 2-5-2z" fill="#e5532a" /><path d="M9.500 3.500H4l.3 3.500h5l-.3 3-2.500.8L4 10" stroke="#fff" strokeWidth="1.4" /></Svg>} t="Aperçu HTML" w={76} />
      </div>
      <div className="flex h-[20px] shrink-0 bg-white">
        <Svg w={18} h={20}><path d="M3 6.5h11M5.5 5v11" stroke="#111" /><path d="M0 19.5h17M17.5 1v18" stroke="#666" /></Svg>
        <Svg w={1} h={20}><path d="M.5 0v20" stroke="#eee" /></Svg>
        <Rulers />
      </div>
      <div className="flex h-[798px] shrink-0">
        <div className="w-[18px] shrink-0 bg-white"><Rulers vertical /></div>
        <div className="flex w-[1069px] shrink-0 overflow-hidden bg-linear-to-b from-[#c9c9c9] to-[#f8f8f8] pt-[14px]">
          <FormPage />
        </div>
        <div className="flex w-[17px] flex-col items-center border-l border-white bg-[#f0f0f0]">
          <div className="flex h-[17px] items-center"><Arrow up /></div>
          <div className="h-[224px] w-[15px] bg-[#cdcdcd]" />
          <div className="mt-auto mb-[5px]"><Arrow /></div>
        </div>
      </div>
    </div>
  );
}

/* ------------------------------------------------------------------ right */

type Item = [string, string, number] | null;
const rows: Item[][] = [
  [["ok", "Bouton", 37], ["check", "Case à cocher", 70], ["circle", "Cercle", 30]],
  [["content", "Zone de contenu", 88], ["date", "Champ Date", 62], ["date", "Champ Date/Heure", 98]],
  [["decimal", "Champ des décimaux", 108], null, ["dropdown", "Liste déroulante", 83]],
  [["ok", "Envoyer par messagerie", 120], null, ["imgfield", "Champ d'image", 79]],
  [["image", "Image", 31], ["ok", "Envoyer via HTTP", 86], ["line", "Ligne", 27]],
  [["listbox", "Zone de liste", 66], ["num", "Champ numérique", 94], null],
  [["barform", "Code à barres de form. (papier)", 159], null, ["password", "Champ Mot de passe", 107]],
  [["ok", "Imprimer", 45], ["radio", "Bouton radio", 67], ["rect", "Rectangle", 50]],
  [["ok", "Réinitialiser", 60], ["imgfield", "Saisie de la signature", 109], null],
  [["sig", "Champ de signature", 103], null, ["subform", "Sous-formulaire", 82]],
  [["table", "Tableau", 40], ["textfield", "Champ de texte", 80], ["text", "Texte", 26]],
  [["date", "Champ Heure", 70], null, null],
];

const ItemRow = ({ items }: { items: Item[] }) => (
  <div className="flex h-[17px] pl-px">
    {items.map((it, i) => (
      <div key={i} className="flex w-[112px] shrink-0 items-center">
        {it && (
          <>
            <div className="flex h-[16px] w-[16px] items-center justify-center self-start">{icons[it[0]]}</div>
            <T w={it[2]} c="ml-[2px]">{it[1]}</T>
          </>
        )}
      </div>
    ))}
  </div>
);

const Accordion = ({ t, w, open }: { t: string; w: number; open?: boolean }) => (
  <div className="flex h-[19px] w-[376px] shrink-0 items-center rounded-t-[2px] bg-linear-to-b from-[#f3f3f3] to-[#d2d2d2] pr-[3px] pl-[4px]">
    <div className="w-[29px]">
      <Svg w={10} h={9}><path d={open ? "M0 2h10L5 7z" : "M2 0v9l5-4.500z"} fill="#000" /></Svg>
    </div>
    <T w={w}>{t}</T>
    <div className="ml-auto"><ListGlyph /></div>
  </div>
);

const Group = ({ c, t, w, lead = "w-[5px]", tail = true }: { c: string; t: string; w: number; lead?: string; tail?: boolean }) => (
  <div className={"ml-[4px] flex w-[254px] items-center " + c}>
    <div className={"mr-px h-px shrink-0 bg-[#a0a0a0] " + lead} />
    <T w={w} c="relative -top-px">{t}</T>
    {tail && <div className="ml-[3px] h-px flex-1 bg-[#a0a0a0]" />}
  </div>
);

function Pair({ c, a, aw, b, bw, ic, bx, dis, it, iw, it2 }: { c: string; a: string; aw: number; b: string; bw: number; ic: string; bx: string; dis?: boolean; it?: string; iw?: number; it2?: string }) {
  return (
    <div className={"flex items-center " + c + (dis ? " text-[#9f9f9f]" : "")}>
      <div className={"shrink-0 pl-[6px] " + bx}><T w={aw} c="relative -top-px">{a}</T></div>
      {dis ? <Combo c="mr-[8px] w-[66px]" dis /> : <Input c={"h-[20px] w-[56px] " + ic} t={it} w={iw} />}
      <div className="w-[59px] shrink-0"><T w={bw} c="relative -top-px">{b}</T></div>
      <Input c="h-[20px] w-[56px]" t={it2} w={iw} dis={dis} />
    </div>
  );
}

const Anchor = ({ a, b }: { a: string; b: string }) => (
  <Svg w={15} h={17}>
    <path d="M1.500 1.500h8l3 3v11h-11z" fill="url(#pg)" stroke="#6a9bd0" />
    <path d="M7 4l1.500 3L12 8.500 8.500 10 7 13l-1.500-3L2 8.500 5.500 7z" fill="#e5202c" />
    <circle cx="7" cy="8.500" r="1.300" fill="#fff" />
    <path d={a} fill="#8fd0cc" stroke="#1a3a3a" />
    <path d={b} stroke="#1a3a3a" />
  </Svg>
);

const DarkAlign = ({ d }: { d: string }) => <Svg w={15} h={11}><path d={d} stroke="#14143c" strokeWidth="1.8" /></Svg>;

function RightDock() {
  return (
    <div className="relative flex w-[408px] shrink-0 flex-col border-l-2 border-[#f8f8f8] bg-[#f0f0f0] pt-[2px] pr-[3px] pl-[2px]">
      <Caption />
      <div className="mt-[3px]">
        <Strip c="w-[395px]">
          <Tab W={158} c="z-20 w-[158px] pl-[8px]" on t="Bibliothèque d'objets" w={119} x="ml-[5px]" />
          <Tab W={176} c="z-10 -ml-[9px] w-[176px] pl-[15px]" t="Bibliothèque de fragments" w={133} />
        </Strip>
      </div>
      <div className="flex h-[317px] pt-[4px] pl-[5px]">
        <div className="flex w-[376px] flex-col">
          <Accordion t="Standard" w={45} open />
          <div className="mt-px h-[230px] border border-[#d4d4d4] bg-white pt-[2px]">
            {rows.map((r, i) => <ItemRow key={i} items={r} />)}
          </div>
          <div className="mt-[2px]"><Accordion t="Personnalisés" w={66} /></div>
          <div className="mt-[3px]"><Accordion t="Codes à barres" w={73} open /></div>
          <div className="mt-px flex-1 border-x border-[#d4d4d4] bg-white pt-[3px]">
            <ItemRow items={[["printbar", "Aztec", 27], ["barcode", "AUS Post Custom2", 94], null]} />
          </div>
        </div>
        <div className="ml-[2px] flex w-[15px] flex-col items-center">
          <div className="flex h-[16px] items-center"><Arrow up /></div>
          <div className="h-[129px] w-[15px] bg-[#cdcdcd]" />
          <div className="mt-auto mb-[5px]"><Arrow /></div>
        </div>
      </div>
      <div className="mt-[3px]"><Rule /></div>
      <div className="mt-px"><Caption /></div>
      <div className="mt-[3px]">
        <Strip c="w-[395px]">
          <Tab W={62} c="z-10 w-[62px] pl-[8px]" t="Objet" w={28} />
          <Tab W={100} c="z-30 -ml-[14px] w-[100px] pl-[8px]" on t="Disposition" w={62} x="ml-[6px]" />
          <Tab W={95} c="z-20 -ml-[8px] w-[95px] pl-[11px]" t="Accessibilité" w={63} />
        </Strip>
      </div>
      <Group c="h-[15px]" t="Taille et position" w={77} lead="w-[4px]" />
      <Pair c="mt-[3px] h-[20px]" a="X :" aw={13} b="Y :" bw={13} ic="mr-[6px]" bx="w-[66px]" it="6,0325 cm" iw={52} it2="2,2225 cm" />
      <Pair c="mt-px h-[20px]" a="Largeur :" aw={43} b="Hauteur :" bw={46} ic="mr-[6px]" bx="w-[66px]" it="2,9286 cm" iw={52} it2="0,5233 cm" />
      <div className="mt-[2px] flex h-[13px] items-center gap-[3px] pl-[16px]">
        <Check /><div className="w-[101px]"><T w={34}>Ajuster</T></div>
        <Check /><T w={34}>Ajuster</T>
      </div>
      <div className="mt-[4px] flex h-[21px] items-center pl-[6px]">
        <div className="w-[60px]"><T w={43} c="relative -top-px">Position :</T></div>
        <Combo c="w-[177px]" t="Haut gauche" w={60} />
      </div>
      <div className="mt-[3px] ml-[4px] flex h-[21px] items-center">
        <div className="flex h-[21px] w-[23px] items-center justify-center border border-[#99c9ef] bg-[#c2dcf2]"><Anchor a="M7.500 9.500h7v6h-7z" b="M9 11h4M11 11v3M9 14h4" /></div>
        <div className="ml-[5px]"><Anchor a="M7.500 1h7v6h-7z" b="M9.500 2.500v3M12.500 2.500v3M9.500 4h3" /></div>
        <div className="ml-[7px]"><Anchor a="M.5 1h7v6h-7z" b="M2 2.500h4M4 2.500v3M2 5.500h4" /></div>
        <div className="ml-[7px]"><Anchor a="M.5 9.500h7v6h-7z" b="M2.500 11v3M5.500 11v3M2.500 12.500h3" /></div>
      </div>
      <Group c="h-[12px]" t="Alignement du contenu dans un conteneur distribué" w={246} lead="w-[4px]" tail={false} />
      <div className="mt-[5px] ml-[4px] flex h-[21px] items-center">
        <div className="flex h-[21px] w-[23px] items-center justify-center border border-[#99c9ef] bg-[#c2dcf2]"><DarkAlign d="M0 1.500h15M0 4.500h11M0 7.500h15M0 9.500h11" /></div>
        <div className="ml-[4px]"><DarkAlign d="M0 1.500h15M3 4.500h9M0 7.500h15M3 9.500h9" /></div>
        <div className="ml-[8px]"><DarkAlign d="M0 1.500h15M4 4.500h11M0 7.500h15M4 9.500h11" /></div>
        <div className="ml-[8px]"><DarkAlign d="M0 1.500h15M0 4.500h15M0 7.500h15M0 9.500h15" /></div>
      </div>
      <Group c="mt-[12px] h-[14px]" t=" Marges" w={39} lead="w-[5px]" />
      <Pair c="mt-[6px] h-[20px]" a="Gauche :" aw={42} b="Haut :" bw={30} ic="mr-[18px]" bx="w-[54px]" it="0,05 cm" iw={38} it2="0,05 cm" />
      <Pair c="mt-[2px] h-[20px]" a="Droite :" aw={36} b="Bas :" bw={24} ic="mr-[18px]" bx="w-[54px]" it="0,05 cm" iw={38} it2="0,05 cm" />
      <Group c="mt-[11px] h-[14px]" t="Libellé" w={28} lead="w-[4px]" />
      <Pair c="mt-[5px] h-[21px]" a="Ancrage :" aw={45} b="Réserver :" bw={50} ic="" bx="w-[54px]" dis />
      <div className="absolute top-[383px] left-0"><VHandle flip /></div>
      <div className="mt-auto"><Rule /></div>
    </div>
  );
}

/* ------------------------------------------------------------------ frame */

const menu: [string, number, string][] = [
  ["Fichier", 35, "w-[49px]"],
  ["Edition", 37, "w-[51px]"],
  ["Affichage", 51, "w-[65px]"],
  ["Insertion", 45, "w-[60px]"],
  ["Tableau", 39, "w-[54px]"],
  ["Disposition", 58, "w-[73px]"],
  ["Outils", 30, "w-[45px]"],
  ["Fenêtre", 38, "w-[53px]"],
  ["Aide", 24, "w-[40px]"],
];

const MdiBtn = ({ d }: { d: string }) => (
  <div className="flex h-[17px] w-[18px] items-center justify-center border border-[#e3e3e3] bg-white">
    <Svg w={10} h={10}><path d={d} stroke="#5f7183" strokeWidth="1.5" /></Svg>
  </div>
);

const Bar = ({ c }: { c: string }) => <div className={"h-[18px] w-px shrink-0 bg-[#d7d7d7] " + c} />;

export default function App() {
  return (
    <div className="h-[1106px] w-[2260px] overflow-hidden bg-white pt-[15px] pl-[171px] font-['Noto_Sans',sans-serif] text-[11px] leading-none text-[#111]">
      <svg width="0" height="0" className="absolute"><Grad /></svg>
      <div className="flex h-[1043px] w-[1925px] flex-col border border-black bg-white">
        <div className="flex h-[24px] items-center pl-[4px] text-[12px]">
          <Svg w={16} h={16} c="-mt-[2px]">
            <rect width="16" height="16" fill="#2b1d17" />
            <circle cx="8" cy="8" r="5.5" stroke="#d06a35" strokeWidth="1.5" />
            <circle cx="8" cy="8" r="3" fill="#8a5a44" stroke="#f0b090" strokeDasharray="1.5 1" />
          </Svg>
          <T w={121} c="relative -top-px ml-[5px]">Designer - [WKND.pdf]</T>
          <Svg w={102} h={12} c="-mt-[2px] mr-[20px] ml-auto">
            <path d="M.5 5.5h10M45.500 3.500h7.500v7.500h-7.500zM47.500 3.500v-2h7.500v7.500h-2M91 1l10 10m0-10L91 11" stroke="#000" />
          </Svg>
        </div>
        <div className="flex h-[17px] items-center pl-[8px] text-[12px]">
          <Svg w={16} h={16}>
            <path d="M2.500 1.500h10l3 3v11h-13z" fill="#f1f1f1" stroke="#c9c9c9" />
            <path d="M0 1h10v5H0z" fill="#1d1512" />
            <circle cx="9" cy="10" r="3.3" stroke="#e9853f" strokeWidth="2" />
          </Svg>
          <div className="ml-[8px] flex">
            {menu.map(([t, w, c]) => <div key={t} className={c}><T w={w}>{t}</T></div>)}
          </div>
          <div className="mr-[2px] ml-auto flex gap-px">
            <MdiBtn d="M2 7.500h6" />
            <MdiBtn d="M1.500 4.500h5v4h-5zM3.500 4V1.500H9V6H7" />
            <MdiBtn d="M2 2l6 6m0-6L2 8" />
          </div>
        </div>
        <div className="h-[3px] shrink-0 border-b border-[#a0a0a0] bg-[#f0f0f0]" />
        <div className="mt-px"><Toolbar1 /></div>
        <Toolbar2 />
        <div className="relative flex h-[39px] shrink-0 items-center border-y border-[#a0a0a0] bg-[#f0f0f0] pt-[3px]">
          <div className="flex h-full w-[19px] flex-col items-center gap-[9px] pt-[3px] pl-px">
            <XMark />
            <Svg w={5} h={3}><path d="M0 0h5L2.5 3z" fill="#000" /></Svg>
          </div>
          <div className="ml-[2px] w-[53px]"><T w={44} c="relative -top-px">Afficher :</T></div>
          <div className="text-[#9a9a9a]"><Combo c="w-[107px]" t="initialize" w={36} /></div>
          <div className="ml-[4px] h-[21px] w-[1229px] border border-[#a3aab5] bg-[#efefef] shadow-[inset_0_0_0_1px_#bccfe8]" />
          <div className="ml-px w-[48px] text-[#9f9f9f]"><T w={42}>Langue :</T></div>
          <Combo c="w-[87px]" dis />
          <div className="ml-[5px] w-[69px] text-[#9f9f9f]"><T w={67}>Exécuter sur :</T></div>
          <Combo c="w-[87px]" dis />
          <div className="absolute bottom-0 left-[924px]"><Handle /></div>
        </div>
        <div className="flex h-[843px] shrink-0">
          <LeftDock />
          <Centre />
          <RightDock />
        </div>
        <div className="relative flex h-[39px] shrink-0 border-b border-[#a0a0a0] bg-[#f0f0f0] pr-[4px]">
          <div className="flex w-[18px] flex-col items-center gap-[9px] pt-[9px] pl-[2px]">
            <XMark />
            <Svg w={5} h={3}><path d="M0 0h5L2.5 3z" fill="#000" /></Svg>
          </div>
          <div className="flex flex-1 flex-col pt-[7px]">
            <div className="flex h-[20px] bg-[#b9b9b9] pt-[2px]">
              <Tab W={114} c="z-30 w-[114px] pl-[8px]" on t="Avertissements" w={89} />
              <Tab W={67} c="z-20 -ml-[10px] w-[67px] pl-[11px]" t="Liaison" w={36} />
              <Tab W={68} c="z-10 -ml-[8px] w-[68px] pl-[11px]" t="Journal" w={36} fill="#0078d7" tc="text-white" />
              <div className="flex-1 border-b border-[#666]" />
              <Notch />
            </div>
            <div className="flex h-[8px] w-[1883px] bg-white">
              <div className="w-[19px] border-r border-[#ddd]" />
              <div className="w-[100px] border-r border-[#ddd]" />
              <div className="w-[1550px] border-r border-[#ddd]" />
              <div className="w-[100px] border-r border-[#ddd]" />
              <div className="w-[80px] border-r border-[#ddd]" />
            </div>
          </div>
          <div className="absolute top-0 left-[924px] scale-y-[-1]"><Handle /></div>
        </div>
        <div className="flex flex-1 items-center border-t border-[#dcdcdc] bg-[#f0f0f0] pl-[4px] text-[12px]">
          <div className="w-[1204px]"><T w={198}>{"Appuyez sur F1 pour obtenir de l'aide."}</T></div>
          <Svg w={16} h={14}>
            <path d="M2.500 0v14M0 11.500h16M0 3.500h3M0 7.500h3M7.500 10v4M11.500 10v4" stroke="#2a4a8a" />
            <path d="M6 1l3 5M9 1L6 6M11 2l2 3 2-3M13 5v3" stroke="#7a2a8a" strokeWidth="1.3" />
          </Svg>
          <div className="ml-[5px] w-[103px]"><T w={61}>0 cm , 0 cm</T></div>
          <Bar c="mr-[4px]" />
          <Svg w={14} h={14}>
            <rect x="2.5" y="2.5" width="10" height="11" fill="#fff" stroke="#2a5a9a" strokeDasharray="2 1" />
            <path d="M0 .5h13M.5 0v13" stroke="#2a5a9a" />
          </Svg>
          <div className="ml-[6px] w-[103px]"><T w={63}>0 cm x 0 cm</T></div>
          <Bar c="mr-[4px]" />
          {icons.text}
          <Bar c="mr-[4px] ml-px" />
          <div className="w-[102px]"><T w={93}>AF_HEADER_TEXT</T></div>
          <Bar c="mr-[5px]" />
          <Svg w={12} h={14}><path d="M.5.5h7l4 4v9H.5z" fill="url(#gy)" stroke="#a8892b" /></Svg>
          <div className="ml-[8px] w-[44px]"><T w={17}>1/2</T></div>
          <Bar c="mr-[7px]" />
          <Svg w={17} h={16}>
            <text x="0" y="9" fontSize="9" fontWeight="700" fontFamily="Noto Sans" fill="#2f74ad" textLength="15" lengthAdjust="spacingAndGlyphs">ABC</text>
            <path d="M10 7l6 5-3 .5 1.500 2.500-1.500.5-1.500-2.500-1.500 1.500z" fill="#222" />
          </Svg>
          <Svg w={14} h={10} c="mb-[4px] ml-[3px]"><rect x=".5" y=".5" width="13" height="9" fill="#fff" stroke="#2f6fae" /><path d="M4.500 2.500v5M3 2.500h3M3 7.500h3" stroke="#333" /></Svg>
          <Bar c="mx-[3px]" />
          <Svg w={12} h={12} c="mb-[3px]"><rect x=".5" y=".5" width="11" height="11" fill="#fff" stroke="#555" /><circle cx="4.500" cy="7" r="2" fill="#2a5ab0" /><path d="M6 5l2-3 2 4z" fill="#d03040" /><path d="M7 6h3v3H7z" fill="#2c9a2c" /></Svg>
          <Bar c="mx-[4px]" />
          <Svg w={15} h={14}><path d="M2.500 1.500h12v10h-12zM0 13.500h12M.5 3v10" stroke="#2a5a7a" /><path d="M5 5h4M7 5v5M9 9h4M11 7v4" stroke="#333" strokeWidth="1.3" /></Svg>
          <Bar c="mr-[4px] ml-[60px]" />
          <div className="w-[52px]"><T w={27}>NUM</T></div>
          <Bar c="" />
        </div>
      </div>
    </div>
  );
}
